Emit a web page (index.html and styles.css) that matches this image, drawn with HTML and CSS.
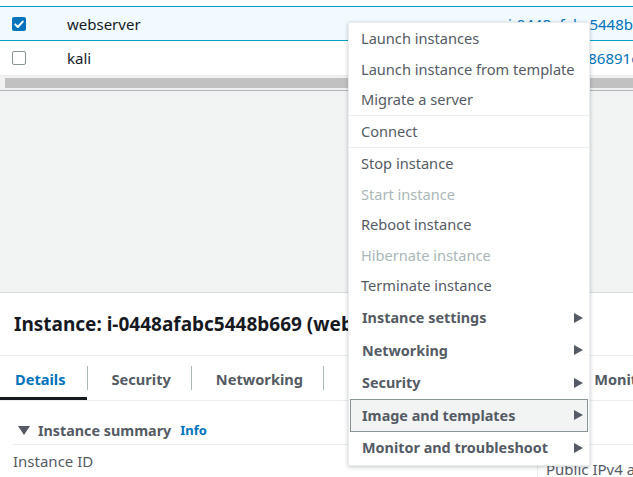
FILE: index.html
```html
<!DOCTYPE html>
<html>
<head>
<meta charset="utf-8">
<link rel="stylesheet" href="styles.css">
</head>
<body>
<div class="page">
  <div class="table">
    <div class="row selected">
      <div class="cell-check"><span class="cb checked"><svg viewBox="0 0 14 14" width="14" height="14"><path d="M3.2 7.4l2.6 2.6 5-5.4" fill="none" stroke="#fff" stroke-width="2" stroke-linecap="round" stroke-linejoin="round"/></svg></span></div>
      <div class="cell-name">webserver</div>
      <div class="cell-id">i-0448afabc5448b669</div>
    </div>
    <div class="row">
      <div class="cell-check"><span class="cb"></span></div>
      <div class="cell-name">kali</div>
      <div class="cell-id">i-0b1e4d2ff86891c3e</div>
    </div>
    <div class="hscroll"><div class="thumb"></div></div>
  </div>
  <div class="gap"></div>
  <div class="panel">
    <div class="panel-head"><h1>Instance: i-0448afabc5448b669 (webserver)</h1></div>
    <div class="tabs">
      <div class="tab active first">Details</div>
      <div class="sep"></div>
      <div class="tab">Security</div>
      <div class="sep"></div>
      <div class="tab">Networking</div>
      <div class="sep"></div>
      <div class="tab">Storage</div>
      <div class="sep"></div>
      <div class="tab">Status checks</div>
      <div class="sep"></div>
      <div class="tab">Monitoring</div>
    </div>
    <div class="summary">
      <div class="summary-head">
        <svg class="caret" viewBox="0 0 12 9" width="12" height="9"><polygon points="0,0 12,0 6,9" fill="#545b64"/></svg>
        <span class="summary-title">Instance summary</span>
        <span class="info">Info</span>
      </div>
      <div class="summary-grid">
        <div class="col left"><div class="label">Instance ID</div></div>
        <div class="col right"><div class="label">Public IPv4 address</div></div>
      </div>
    </div>
  </div>

  <div class="menu">
    <div class="group">
      <div class="item">Launch instances</div>
      <div class="item">Launch instance from template</div>
      <div class="item">Migrate a server</div>
    </div>
    <div class="group connect">
      <div class="item">Connect</div>
    </div>
    <div class="group">
      <div class="item">Stop instance</div>
      <div class="item disabled">Start instance</div>
      <div class="item">Reboot instance</div>
      <div class="item disabled">Hibernate instance</div>
      <div class="item">Terminate instance</div>
    </div>
    <div class="subs">
      <div class="item sub">Instance settings<svg viewBox="0 0 9 10" width="9" height="10"><polygon points="0,0 9,5 0,10" fill="#545b64"/></svg></div>
      <div class="item sub">Networking<svg viewBox="0 0 9 10" width="9" height="10"><polygon points="0,0 9,5 0,10" fill="#545b64"/></svg></div>
      <div class="item sub">Security<svg viewBox="0 0 9 10" width="9" height="10"><polygon points="0,0 9,5 0,10" fill="#545b64"/></svg></div>
      <div class="item sub hover">Image and templates<svg viewBox="0 0 9 10" width="9" height="10"><polygon points="0,0 9,5 0,10" fill="#545b64"/></svg></div>
      <div class="item sub">Monitor and troubleshoot<svg viewBox="0 0 9 10" width="9" height="10"><polygon points="0,0 9,5 0,10" fill="#545b64"/></svg></div>
    </div>
  </div>
</div>
</body>
</html>
```

FILE: styles.css
```css
* { box-sizing: border-box; }
html, body { margin: 0; padding: 0; }
body {
  font-family: "Noto Sans", "Open Sans", sans-serif;
  color: #16191f;
  background: #fff;
}
.page {
  position: relative;
  width: 633px;
  height: 477px;
  overflow: hidden;
}

/* table */
.table { padding-top: 6px; background: #fff; }
.row {
  display: flex;
  align-items: center;
  height: 35px;
  border-bottom: 1px solid #eaeded;
  font-size: 15px;
  white-space: nowrap;
  overflow: hidden;
}
.row.selected {
  background: #f1faff;
  border-top: 1px solid #00a1c9;
  border-bottom: 1px solid #00a1c9;
}
.cell-check { flex: none; width: 67px; padding-left: 12px; display: flex; align-items: center; }
.cb {
  display: block;
  width: 14px;
  height: 14px;
  border: 1.5px solid #879596;
  border-radius: 2px;
  background: #fff;
}
.cb.checked { border: none; background: #0073bb; }
.cb svg { display: block; }
.cell-name { flex: none; width: 441px; color: #16191f; }
.cell-id { flex: none; color: #0073bb; }
.hscroll {
  height: 15px;
  background: #f1f1f1;
  padding: 2px 0 2px 5px;
  border-bottom: 1px solid #aab7b8;
}
.thumb { height: 100%; background: #c1c1c1; margin-right: -20px; }

.gap { height: 202px; background: #f2f3f3; border-bottom: 1px solid #d5dbdb; }

/* panel */
.panel { background: #fff; }
.panel-head { height: 62px; display: flex; align-items: center; padding-left: 14px; overflow: hidden; }
.panel-head h1 {
  margin: 0;
  font-size: 19px;
  font-weight: 700;
  white-space: nowrap;
  color: #16191f;
}
.tabs {
  display: flex;
  align-items: center;
  height: 46px;
  border-top: 1px solid #eaeded;
  border-bottom: 1px solid #eaeded;
  white-space: nowrap;
  overflow: hidden;
}
.tab {
  flex: none;
  height: 100%;
  display: flex;
  align-items: center;
  padding: 2px 20px 0 24px;
  font-size: 14.6px;
  font-weight: 700;
  color: #545b64;
}
.tab.first { padding-left: 15px; padding-right: 21px; }
.tab.active { color: #0073bb; box-shadow: inset 0 -3px 0 #16191f; }
.sep { flex: none; width: 1px; height: 24px; background: #aab7b8; }

.summary { padding: 17px 0 0 13px; }
.summary-head {
  display: flex;
  align-items: center;
  height: 24px;
  padding-left: 5px;
  white-space: nowrap;
}
.caret { display: block; margin-right: 8px; }
.summary-title { font-size: 14.3px; font-weight: 700; color: #545b64; }
.info { font-size: 13px; font-weight: 700; color: #0073bb; margin-left: 9px; }
.summary-grid {
  display: flex;
  margin-top: 2px;
  border-top: 1px solid #eaeded;
}
.col { padding-top: 6px; }
.col.left { flex: none; width: 524px; }
.col.right { flex: 1; min-width: 0; border-left: 1px solid #eaeded; padding-left: 8px; padding-top: 14px; height: 40px; }
.label { font-size: 15px; color: #545b64; white-space: nowrap; }

/* menu */
.menu {
  position: absolute;
  left: 348px;
  top: 22px;
  width: 242px;
  background: #fff;
  border: 1px solid #eaeded;
  box-shadow: 0 1px 4px rgba(0, 28, 36, 0.25);
  padding: 0 0 1px;
}
.group + .group { border-top: 1px solid #eaeded; }
.group.connect { padding-bottom: 1px; }
.subs { padding-top: 1px; }
.item {
  display: flex;
  align-items: center;
  justify-content: space-between;
  height: 30.5px;
  padding: 0 12px;
  font-size: 14.6px;
  color: #545b64;
  white-space: nowrap;
}
.item.disabled { color: #aab7b8; }
.item.sub {
  height: 32.5px;
  font-size: 14.4px;
  font-weight: 700;
  padding: 0 4px 0 11px;
  margin: 0 1px;
  border: 1px solid transparent;
}
.item.sub svg { display: block; }
.item.hover { background: #f2f3f3; border-color: #879596; }
```
